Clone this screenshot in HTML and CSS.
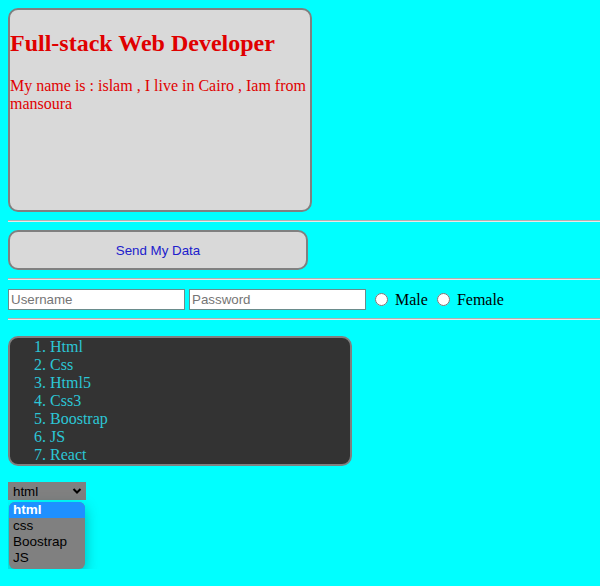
FILE: index.html
```html
<!DOCTYPE html>
<html>
<head>
<meta charset="utf-8">
<link rel="stylesheet" href="styles.css">
</head>
<body>
<div class="card">
  <h1 class="title">Full-stack Web Developer</h1>
  <p class="intro">My name is : islam , I live in Cairo , Iam from mansoura</p>
</div>
<hr class="rule">
<button class="send" type="button">Send My Data</button>
<hr class="rule">
<form class="login">
  <input class="field" type="text" placeholder="Username">
  <input class="field" type="password" placeholder="Password">
  <label class="opt"><input class="radio" type="radio" name="g">Male</label>
  <label class="opt"><input class="radio" type="radio" name="g">Female</label>
</form>
<hr class="rule">
<ol class="skills">
  <li>Html</li>
  <li>Css</li>
  <li>Html5</li>
  <li>Css3</li>
  <li>Boostrap</li>
  <li>JS</li>
  <li>React</li>
</ol>
<div class="picker">
  <div class="select">
    <span class="select-value">html</span>
    <svg class="chev" width="10" height="8" viewBox="0 0 10 8"><path d="M1.5 2 L5 5.5 L8.5 2" fill="none" stroke="#000" stroke-width="2"/></svg>
  </div>
  <div class="choices">
    <div class="choice current">html</div>
    <div class="choice">css</div>
    <div class="choice">Boostrap</div>
    <div class="choice">JS</div>
  </div>
</div>
</body>
</html>
```
FILE: styles.css
```css
html, body {
  background: #00ffff;
}
body {
  margin: 8px 0 8px 8px;
  font-family: "Liberation Serif", "Times New Roman", serif;
  font-size: 16px;
}
.card {
  width: 300px;
  height: 200px;
  background: #d9d9d9;
  border: 2px solid #808080;
  border-radius: 10px;
  color: #e00000;
}
.title {
  font-size: 24px;
  font-weight: bold;
  margin: 20px 0;
}
.intro {
  margin: 16px 0;
}
.rule {
  display: block;
  margin: 8px 0;
  border: 0;
  border-top: 1px solid #b0b0b0;
  border-bottom: 1px solid #e8e8e8;
  height: 0;
}
.send {
  display: block;
  width: 300px;
  height: 40px;
  margin: 0;
  background: #d9d9d9;
  border: 2px solid #808080;
  border-radius: 10px;
  color: #2020cc;
  font-family: "Liberation Sans", Arial, sans-serif;
  font-size: 13.33px;
  padding: 0;
}
.login {
  display: flex;
  align-items: center;
  height: 22px;
  margin: 0;
}
.field {
  box-sizing: border-box;
  width: 177px;
  height: 21px;
  margin: 0 4px 0 0;
  padding: 1px 2px;
  border: 1px solid #6a8c8c;
  border-radius: 0;
  background: #fff;
  font-family: "Liberation Sans", Arial, sans-serif;
  font-size: 13.33px;
}
.field::placeholder {
  color: #757575;
}
.opt {
  display: flex;
  align-items: center;
  margin-right: 4px;
  padding-top: 1px;
}
.radio {
  width: 13px;
  height: 13px;
  margin: 0 7px 0 5px;
}
.skills {
  width: 300px;
  margin: 16px 0;
  padding: 0 0 0 40px;
  background: #333333;
  border: 2px solid #808080;
  border-radius: 10px;
  color: #2cc6d6;
  line-height: 18px;
}
.picker {
  width: 78px;
}
.select {
  box-sizing: border-box;
  width: 78px;
  height: 18px;
  background: #808080;
  display: flex;
  align-items: center;
  justify-content: space-between;
  padding: 0 4px 0 5px;
  font-family: "Liberation Sans", Arial, sans-serif;
  font-size: 13.33px;
  color: #000;
}
.choices {
  width: 76px;
  margin: 2px 0 0 1px;
  padding: 0 0 3px;
  background: #808080;
  border-radius: 6px;
  overflow: hidden;
  box-shadow: 0 5px 14px rgba(0, 70, 70, 0.4);
  font-family: "Liberation Sans", Arial, sans-serif;
  font-size: 13.5px;
  color: #000;
}
.choice {
  height: 16px;
  line-height: 16px;
  padding-left: 4px;
}
.choice.current {
  background: #1e90ff;
  color: #fff;
  font-weight: bold;
}
```
